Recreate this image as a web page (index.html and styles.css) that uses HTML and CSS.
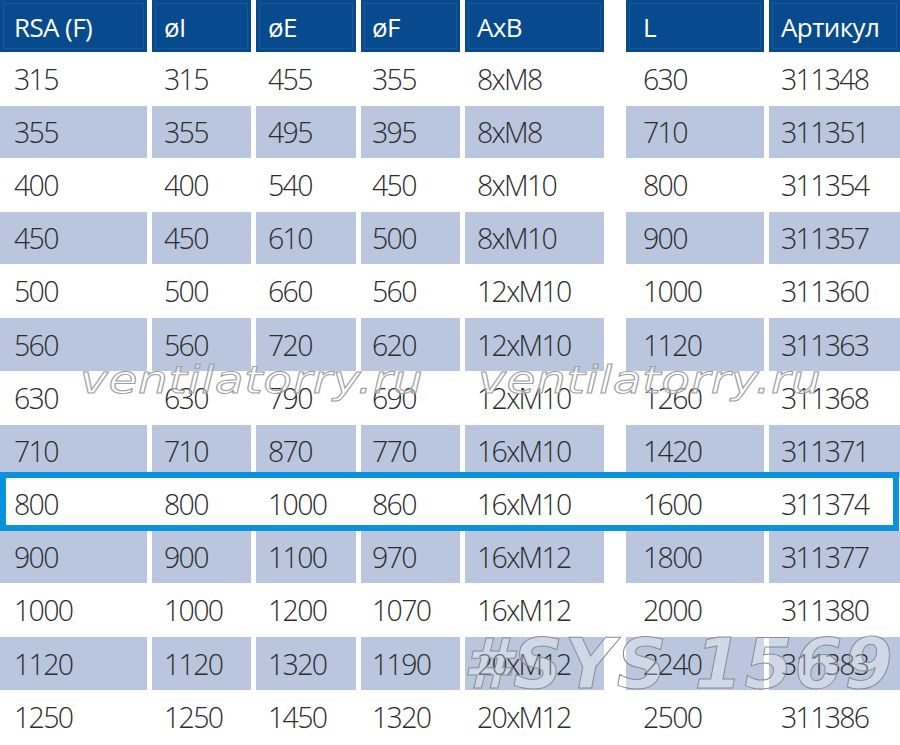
FILE: index.html
```html
<!DOCTYPE html>
<html lang="ru">
<head>
<meta charset="utf-8">
<title>RSA (F)</title>
<link rel="stylesheet" href="styles.css">
</head>
<body>
<div class="sheet">
  <div class="row head">
    <div class="cell">RSA (F)</div>
    <div class="cell">øI</div>
    <div class="cell">øE</div>
    <div class="cell">øF</div>
    <div class="cell">AxB</div>
    <div class="cell">L</div>
    <div class="cell">Артикул</div>
  </div>
  <div class="row"><div class="cell">315</div><div class="cell">315</div><div class="cell">455</div><div class="cell">355</div><div class="cell">8xM8</div><div class="cell">630</div><div class="cell">311348</div></div>
  <div class="row alt"><div class="cell">355</div><div class="cell">355</div><div class="cell">495</div><div class="cell">395</div><div class="cell">8xM8</div><div class="cell">710</div><div class="cell">311351</div></div>
  <div class="row"><div class="cell">400</div><div class="cell">400</div><div class="cell">540</div><div class="cell">450</div><div class="cell">8xM10</div><div class="cell">800</div><div class="cell">311354</div></div>
  <div class="row alt"><div class="cell">450</div><div class="cell">450</div><div class="cell">610</div><div class="cell">500</div><div class="cell">8xM10</div><div class="cell">900</div><div class="cell">311357</div></div>
  <div class="row"><div class="cell">500</div><div class="cell">500</div><div class="cell">660</div><div class="cell">560</div><div class="cell">12xM10</div><div class="cell">1000</div><div class="cell">311360</div></div>
  <div class="row alt"><div class="cell">560</div><div class="cell">560</div><div class="cell">720</div><div class="cell">620</div><div class="cell">12xM10</div><div class="cell">1120</div><div class="cell">311363</div></div>
  <div class="row"><div class="cell">630</div><div class="cell">630</div><div class="cell">790</div><div class="cell">690</div><div class="cell">12xM10</div><div class="cell">1260</div><div class="cell">311368</div></div>
  <div class="row alt"><div class="cell">710</div><div class="cell">710</div><div class="cell">870</div><div class="cell">770</div><div class="cell">16xM10</div><div class="cell">1420</div><div class="cell">311371</div></div>
  <div class="row selected"><div class="cell">800</div><div class="cell">800</div><div class="cell">1000</div><div class="cell">860</div><div class="cell">16xM10</div><div class="cell">1600</div><div class="cell">311374</div></div>
  <div class="row alt"><div class="cell">900</div><div class="cell">900</div><div class="cell">1100</div><div class="cell">970</div><div class="cell">16xM12</div><div class="cell">1800</div><div class="cell">311377</div></div>
  <div class="row"><div class="cell">1000</div><div class="cell">1000</div><div class="cell">1200</div><div class="cell">1070</div><div class="cell">16xM12</div><div class="cell">2000</div><div class="cell">311380</div></div>
  <div class="row alt"><div class="cell">1120</div><div class="cell">1120</div><div class="cell">1320</div><div class="cell">1190</div><div class="cell">20xM12</div><div class="cell">2240</div><div class="cell">311383</div></div>
  <div class="row"><div class="cell">1250</div><div class="cell">1250</div><div class="cell">1450</div><div class="cell">1320</div><div class="cell">20xM12</div><div class="cell">2500</div><div class="cell">311386</div></div>

  <span class="wm wm-left">ventilatorry.ru</span>
  <span class="wm wm-right">ventilatorry.ru</span>
  <span class="stamp">#SYS 1569</span>
</div>
</body>
</html>
```

FILE: styles.css
```css
html, body {
  margin: 0;
  padding: 0;
  background: #ffffff;
}

.sheet {
  position: relative;
  width: 900px;
  height: 745px;
  overflow: hidden;
  font-family: "Open Sans", "Noto Sans", sans-serif;
  color: #2c2c2e;
}

.row {
  display: grid;
  grid-template-columns: 147px 99px 100px 99px 139px 155px 131px;
  column-gap: 5px;
  height: 53.2px;
}

.cell {
  display: flex;
  align-items: center;
  padding-left: 12px;
  font-size: 28.5px;
  font-weight: 300;
  letter-spacing: -1.7px;
  white-space: nowrap;
  box-sizing: border-box;
}

.cell:nth-child(1) { padding-left: 14px; }
.cell:nth-child(4) { padding-left: 11px; }
.cell:nth-child(6) { margin-left: 17px; padding-left: 17px; }

.row.head {
  height: 52px;
}

.row.head .cell {
  background: #084a8e;
  color: #ffffff;
  font-size: 26px;
  font-weight: 500;
  letter-spacing: -0.6px;
  padding-top: 1px;
  box-shadow: inset 0 0 0 3px #084a8e, inset 0 0 0 4px #1a5897;
}

.row.alt .cell {
  background: #b9c6de;
  height: 52.4px;
  align-self: start;
  margin-top: 0.4px;
}

.row.selected {
  position: relative;
}

.row.selected::after {
  content: "";
  position: absolute;
  left: 0;
  top: -5.6px;
  width: 899px;
  height: 59px;
  box-sizing: border-box;
  border: 6px solid #0a93dc;
  pointer-events: none;
}

.wm {
  position: absolute;
  top: 362px;
  font-family: "DejaVu Sans", sans-serif;
  font-style: italic;
  font-size: 37px;
  line-height: 37px;
  letter-spacing: 0.5px;
  color: rgba(255, 255, 255, 0.45);
  -webkit-text-stroke: 1px #a0a0a0;
  white-space: nowrap;
  transform: scaleX(1.27);
  transform-origin: left center;
}

.wm-left { left: 80px; }
.wm-right { left: 478px; }

.stamp {
  position: absolute;
  left: 463px;
  top: 630px;
  font-family: "DejaVu Sans", sans-serif;
  font-style: italic;
  font-weight: 700;
  font-size: 69px;
  line-height: 68px;
  letter-spacing: 2px;
  color: rgba(255, 255, 255, 0.32);
  -webkit-text-stroke: 1px #8c8c8c;
  white-space: nowrap;
}
```
